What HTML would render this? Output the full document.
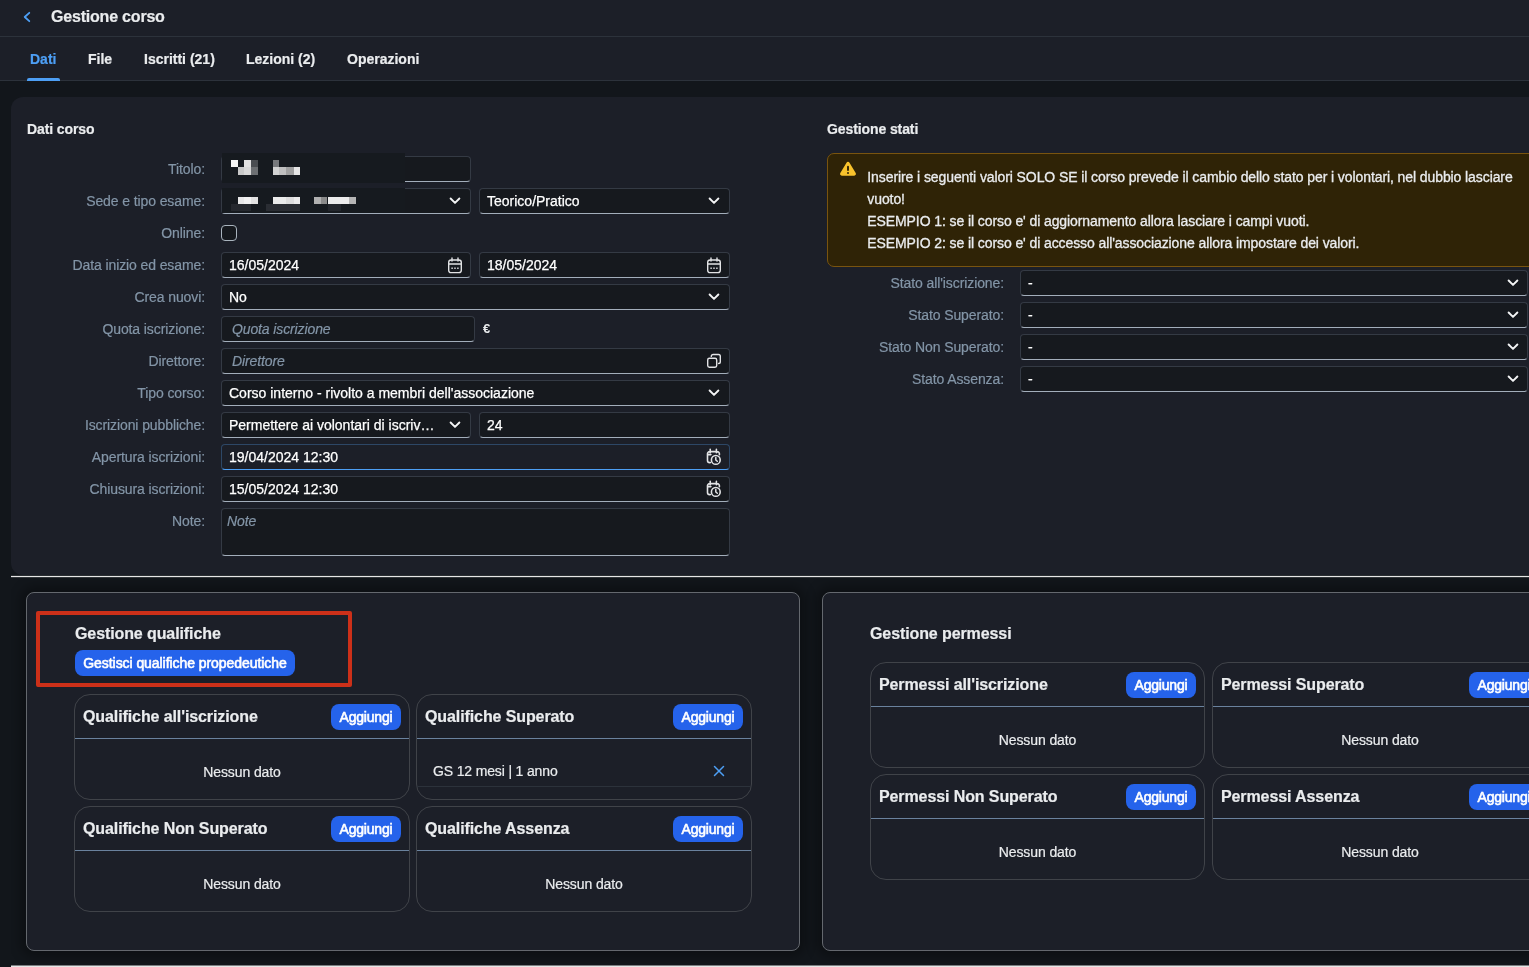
<!DOCTYPE html>
<html lang="it">
<head>
<meta charset="utf-8">
<title>Gestione corso</title>
<style>
*{box-sizing:border-box;margin:0;padding:0}
html,body{width:1529px;height:967px;overflow:hidden;background:#12161b}
body{font-family:"Liberation Sans",sans-serif;font-size:14px;color:#eaecee;-webkit-font-smoothing:antialiased}
#app{will-change:transform;position:relative;width:1529px;height:967px;overflow:hidden;background:#12161b}
.abs{position:absolute}
/* header */
.bar{position:absolute;left:0;top:0;width:1529px;height:37px;background:#1c1f28;border-bottom:1px solid #2c323b}
.bar h1{position:absolute;left:51px;top:7px;font-size:16px;font-weight:bold;line-height:20px;color:#eaecee;white-space:nowrap;letter-spacing:-.2px;-webkit-text-stroke:.2px #eaecee}
.tabs{position:absolute;left:0;top:37px;width:1529px;height:44px;background:#1c1f28;border-bottom:1px solid #2c323b}
.tabs a{position:absolute;top:13px;-webkit-text-stroke:.2px;font-weight:bold;font-size:14px;line-height:18px;color:#eaecee;white-space:nowrap;text-decoration:none}
.tabs a.sel{color:#4d9ff5}
.tabs .ind{position:absolute;left:27px;top:41px;width:33px;height:3px;background:#4d9ff5;border-radius:2px 2px 0 0}
/* panel */
.panel{position:absolute;left:11px;top:97px;width:1540px;height:478px;background:#1c1f28;border-radius:12px}
.sep{position:absolute;left:11px;height:3px;width:1530px;background:linear-gradient(rgba(255,255,255,.1) 0,rgba(255,255,255,.1) 1px,#e6e6e6 1px,#e6e6e6 2px,rgba(255,255,255,.14) 2px,rgba(255,255,255,.14) 3px)}
.sep.b{height:2px;background:linear-gradient(#7c7e81 0,#7c7e81 1px,#e6e6e6 1px,#e6e6e6 2px)}
.lower{position:absolute;left:11px;top:578px;width:1518px;height:387px;overflow:hidden}
h2{position:absolute;font-size:14px;font-weight:bold;line-height:18px;color:#eaecee;white-space:nowrap;letter-spacing:-.1px;-webkit-text-stroke:.2px #eaecee}
h3{position:absolute;font-size:16px;font-weight:bold;line-height:20px;color:#eaecee;white-space:nowrap;letter-spacing:-.1px;-webkit-text-stroke:.2px #eaecee}
label{position:absolute;text-align:right;color:#8395a7;font-size:14px;line-height:18px;white-space:nowrap;letter-spacing:-.1px;-webkit-text-stroke:.2px #8395a7}
.f{position:absolute;height:26px;background:#16191e;border:1px solid #343a44;border-bottom-color:#a3aebb;border-radius:4px;font-size:14px;line-height:24px;padding:0 7px;color:#fff;white-space:nowrap;overflow:hidden;-webkit-text-stroke:.25px #fff}
.f.ph{font-style:italic;color:#8395a7;padding-left:10px;letter-spacing:-.12px;-webkit-text-stroke:.2px #8395a7}
.f.hov{background:#1c1f28;border-color:#2d4766;border-bottom-color:#4d9ff5}
.f svg{position:absolute}

.el{display:inline-block;max-width:207px;overflow:hidden;text-overflow:ellipsis;vertical-align:top}
.cb{position:absolute;width:16px;height:16px;border:1px solid #a9b4be;border-radius:4px;background:#16191e}
.f.ph.ta{line-height:18px;padding-top:3px;padding-left:5px}
.strip{position:absolute;width:720px;height:114px;background:#2f2306;border:1px solid #79540f;border-radius:7px}
.strip p{position:absolute;left:39.3px;top:12px;width:670px;font-size:14px;line-height:22px;color:#eaecee;letter-spacing:-.09px;-webkit-text-stroke:.3px #eaecee}

.box{position:absolute;background:#1c1f28;border:1px solid #64686e;border-radius:8px;box-shadow:0 0 12px 5px rgba(0,0,0,.33)}
.hl{position:absolute;border:4px solid #cc3019;border-radius:2px}
.btn{position:absolute;height:26px;border:0;border-radius:8px;background:#2563eb;color:#fff;font-family:inherit;font-size:14px;font-weight:normal;-webkit-text-stroke:0.6px #fff;letter-spacing:-0.06px;line-height:26px;text-align:center;white-space:nowrap;padding:0}
.card{position:absolute;width:336px;height:106px;border:1px solid #404349;border-radius:16px;overflow:hidden}
.card header{position:absolute;left:0;top:0;right:0;height:44px;border-bottom:1px solid #6a829e}
.card h3{left:8px;top:11.5px}
.card .btn{right:8px;top:9px;width:70px;letter-spacing:-.2px}
.card .nd{position:absolute;left:0;right:0;top:68px;text-align:center;font-size:14px;line-height:18px;color:#eaecee;letter-spacing:-.1px;-webkit-text-stroke:.2px #eaecee}
.list{position:absolute;left:0;right:0;top:44px;list-style:none}
.list li{position:relative;height:48px;border-bottom:1px solid #2c323b;padding:23px 0 0 16px;font-size:14px;line-height:18px;color:#eaecee;letter-spacing:-.15px;-webkit-text-stroke:.2px #eaecee}
.redact i{position:absolute;display:block}
.eur{font-size:13px;line-height:18px;font-weight:bold;color:#eaecee;margin-top:1px}
</style>
</head>
<body>
<div id="app">
<header class="bar">
  <svg class="abs" style="left:22px;top:11px" width="10" height="12" viewBox="0 0 10 12"><path d="M7.3 1.8 2.7 6l4.6 4.2" fill="none" stroke="#4d9ff5" stroke-width="1.8" stroke-linecap="round" stroke-linejoin="round"/></svg>
  <h1>Gestione corso</h1>
</header>
<nav class="tabs">
  <a class="sel" style="left:30px">Dati</a>
  <a style="left:88px">File</a>
  <a style="left:144px">Iscritti (21)</a>
  <a style="left:246px">Lezioni (2)</a>
  <a style="left:347px">Operazioni</a>
  <span class="ind"></span>
</nav>
<main>
<section class="panel" id="panel">
<h2 style="left:16px;top:23px">Dati corso</h2>
<label style="left:-6px;width:200px;top:63px">Titolo:</label>
<label style="left:-6px;width:200px;top:95px">Sede e tipo esame:</label>
<label style="left:-6px;width:200px;top:127px">Online:</label>
<label style="left:-6px;width:200px;top:159px">Data inizio ed esame:</label>
<label style="left:-6px;width:200px;top:191px">Crea nuovi:</label>
<label style="left:-6px;width:200px;top:223px">Quota iscrizione:</label>
<label style="left:-6px;width:200px;top:255px">Direttore:</label>
<label style="left:-6px;width:200px;top:287px">Tipo corso:</label>
<label style="left:-6px;width:200px;top:319px">Iscrizioni pubbliche:</label>
<label style="left:-6px;width:200px;top:351px">Apertura iscrizioni:</label>
<label style="left:-6px;width:200px;top:383px">Chiusura iscrizioni:</label>
<label style="left:-6px;width:200px;top:415px">Note:</label>
<div class="f" style="left:210px;top:59px;width:250px"></div>
<div class="f" style="left:210px;top:91px;width:250px"><svg style="right:9px;top:8px" width="12" height="8" viewBox="0 0 12 8"><path d="M1.6 1.5 6 5.9l4.4-4.4" fill="none" stroke="#f3f4f5" stroke-width="1.9" stroke-linecap="round" stroke-linejoin="round"/></svg></div>
<div class="f" style="left:468px;top:91px;width:251px">Teorico/Pratico<svg style="right:9px;top:8px" width="12" height="8" viewBox="0 0 12 8"><path d="M1.6 1.5 6 5.9l4.4-4.4" fill="none" stroke="#f3f4f5" stroke-width="1.9" stroke-linecap="round" stroke-linejoin="round"/></svg></div>
<span class="cb" style="left:210px;top:128px"></span>
<div class="f" style="left:210px;top:155px;width:250px">16/05/2024<svg style="right:7px;top:3.5px" width="16" height="17" viewBox="0 0 16 17"><rect x="1.7" y="3" width="12.6" height="12.6" rx="2.4" fill="none" stroke="#e2e3e5" stroke-width="1.4"/><path d="M1.7 7h12.6M5 .9v3.2M11 .9v3.2" stroke="#e2e3e5" stroke-width="1.4" stroke-linecap="round" fill="none"/><path d="M4.4 11.3h1.4M7.3 11.3h1.4M10.2 11.3h1.4" stroke="#e2e3e5" stroke-width="1.5" fill="none"/></svg></div>
<div class="f" style="left:468px;top:155px;width:251px">18/05/2024<svg style="right:7px;top:3.5px" width="16" height="17" viewBox="0 0 16 17"><rect x="1.7" y="3" width="12.6" height="12.6" rx="2.4" fill="none" stroke="#e2e3e5" stroke-width="1.4"/><path d="M1.7 7h12.6M5 .9v3.2M11 .9v3.2" stroke="#e2e3e5" stroke-width="1.4" stroke-linecap="round" fill="none"/><path d="M4.4 11.3h1.4M7.3 11.3h1.4M10.2 11.3h1.4" stroke="#e2e3e5" stroke-width="1.5" fill="none"/></svg></div>
<div class="f" style="left:210px;top:187px;width:509px">No<svg style="right:9px;top:8px" width="12" height="8" viewBox="0 0 12 8"><path d="M1.6 1.5 6 5.9l4.4-4.4" fill="none" stroke="#f3f4f5" stroke-width="1.9" stroke-linecap="round" stroke-linejoin="round"/></svg></div>
<div class="f ph" style="left:210px;top:219px;width:254px">Quota iscrizione</div>
<span class="abs eur" style="left:472px;top:222px">€</span>
<div class="f ph" style="left:210px;top:251px;width:509px">Direttore<svg style="right:7px;top:4px" width="16" height="16" viewBox="0 0 16 16"><rect x="1.7" y="5.2" width="9" height="9" rx="1.7" fill="none" stroke="#e2e3e5" stroke-width="1.4"/><path d="M5.3 3.4V3.3A1.8 1.8 0 0 1 7.1 1.5h5.4A1.8 1.8 0 0 1 14.3 3.3v5.4A1.8 1.8 0 0 1 12.5 10.5" fill="none" stroke="#e2e3e5" stroke-width="1.4" stroke-linecap="round"/></svg></div>
<div class="f" style="left:210px;top:283px;width:509px">Corso interno - rivolto a membri dell'associazione<svg style="right:9px;top:8px" width="12" height="8" viewBox="0 0 12 8"><path d="M1.6 1.5 6 5.9l4.4-4.4" fill="none" stroke="#f3f4f5" stroke-width="1.9" stroke-linecap="round" stroke-linejoin="round"/></svg></div>
<div class="f" style="left:210px;top:315px;width:250px"><span class="el">Permettere ai volontari di iscriversi</span><svg style="right:9px;top:8px" width="12" height="8" viewBox="0 0 12 8"><path d="M1.6 1.5 6 5.9l4.4-4.4" fill="none" stroke="#f3f4f5" stroke-width="1.9" stroke-linecap="round" stroke-linejoin="round"/></svg></div>
<div class="f" style="left:468px;top:315px;width:251px">24</div>
<div class="f hov" style="left:210px;top:347px;width:509px">19/04/2024 12:30<svg style="right:7px;top:3px" width="16" height="18" viewBox="0 0 16 18"><path d="M4.3 14.6H3.7A2.2 2.2 0 0 1 1.5 12.4V5.8A2.2 2.2 0 0 1 3.7 3.6h7.5a2.2 2.2 0 0 1 2.2 2.2v.9M1.5 6.6h3.4M4.2 1.3v3.4M10.4 1.3v3.4" fill="none" stroke="#e2e3e5" stroke-width="1.6" stroke-linecap="round"/><circle cx="9.8" cy="11.9" r="4.4" fill="none" stroke="#e2e3e5" stroke-width="1.6"/><path d="M9.8 9.6v2.4l1.5 1.3" fill="none" stroke="#e2e3e5" stroke-width="1.5" stroke-linecap="round" stroke-linejoin="round"/></svg></div>
<div class="f" style="left:210px;top:379px;width:509px">15/05/2024 12:30<svg style="right:7px;top:3px" width="16" height="18" viewBox="0 0 16 18"><path d="M4.3 14.6H3.7A2.2 2.2 0 0 1 1.5 12.4V5.8A2.2 2.2 0 0 1 3.7 3.6h7.5a2.2 2.2 0 0 1 2.2 2.2v.9M1.5 6.6h3.4M4.2 1.3v3.4M10.4 1.3v3.4" fill="none" stroke="#e2e3e5" stroke-width="1.6" stroke-linecap="round"/><circle cx="9.8" cy="11.9" r="4.4" fill="none" stroke="#e2e3e5" stroke-width="1.6"/><path d="M9.8 9.6v2.4l1.5 1.3" fill="none" stroke="#e2e3e5" stroke-width="1.5" stroke-linecap="round" stroke-linejoin="round"/></svg></div>
<div class="f ph ta" style="left:210px;top:411px;width:509px;height:48px">Note</div>
<div class="redact" aria-hidden="true"><i style="left:211px;top:56px;width:183px;height:29.5px;background:#161a1f"></i><i style="left:211px;top:91px;width:183px;height:25px;background:#161a1f"></i><i style="left:219.5px;top:63.1px;width:7.2px;height:7.3px;background:#f4f4f4"></i><i style="left:232.9px;top:63.1px;width:7.1px;height:7.3px;background:#e2e2e2"></i><i style="left:240px;top:63.1px;width:6.8px;height:7.3px;background:#4a4d51"></i><i style="left:226.7px;top:70.4px;width:6.2px;height:7.4px;background:#c8c8c8"></i><i style="left:232.9px;top:70.4px;width:7.1px;height:7.4px;background:#d8d8d8"></i><i style="left:240px;top:70.4px;width:6.8px;height:7.4px;background:#6c6f72"></i><i style="left:261.9px;top:63.1px;width:5.8px;height:7.3px;background:#77797c"></i><i style="left:261.9px;top:70.4px;width:5.8px;height:7.4px;background:#d2d2d2"></i><i style="left:267.7px;top:70.4px;width:7px;height:7.4px;background:#bfbfbf"></i><i style="left:274.7px;top:70.4px;width:7.9px;height:7.4px;background:#a0a0a0"></i><i style="left:282.6px;top:70.4px;width:6.2px;height:7.4px;background:#e6e6e6"></i><i style="left:226.7px;top:99.7px;width:6.2px;height:7.5px;background:#e8e8e8"></i><i style="left:232.9px;top:99.7px;width:7.1px;height:7.5px;background:#f2f2f2"></i><i style="left:240px;top:99.7px;width:6.8px;height:7.5px;background:#e2e2e2"></i><i style="left:261.9px;top:99.7px;width:12.8px;height:7.5px;background:#ebebeb"></i><i style="left:274.7px;top:99.7px;width:7.9px;height:7.5px;background:#dedede"></i><i style="left:282.6px;top:99.7px;width:6.2px;height:7.5px;background:#ececec"></i><i style="left:302.5px;top:99.7px;width:7.4px;height:7.5px;background:#b0b0b0"></i><i style="left:309.9px;top:99.7px;width:6.6px;height:7.5px;background:#8a8a8a"></i><i style="left:316.5px;top:99.7px;width:21px;height:7.5px;background:#ececec"></i><i style="left:337.5px;top:99.7px;width:7.5px;height:7.5px;background:#b5b5b5"></i><i style="left:219.5px;top:107.2px;width:20.5px;height:7px;background:#25282e"></i><i style="left:254.9px;top:107.2px;width:33.9px;height:7px;background:#2a2d33"></i><i style="left:316.5px;top:107.2px;width:13.8px;height:7px;background:#23262c"></i></div>
<h2 style="left:816px;top:23px">Gestione stati</h2>
<div class="strip" style="left:816px;top:56px"><svg class="abs" style="left:10.5px;top:7px" width="18" height="16" viewBox="0 0 18 16"><path d="M9 .8c.7 0 1.2.4 1.5 1l6.2 10.3c.7 1.2-.1 2.6-1.5 2.6H2.8c-1.4 0-2.2-1.4-1.5-2.6L7.5 1.8c.3-.6.8-1 1.5-1z" fill="#f8c22c"/><path d="M9 5.7v3.4" stroke="#2f2306" stroke-width="1.9" stroke-linecap="round"/><circle cx="9" cy="12.1" r="1" fill="#2f2306"/></svg><p>Inserire i seguenti valori SOLO SE il corso prevede il cambio dello stato per i volontari, nel dubbio lasciare vuoto!<br>ESEMPIO 1: se il corso e' di aggiornamento allora lasciare i campi vuoti.<br>ESEMPIO 2: se il corso e' di accesso all'associazione allora impostare dei valori.</p></div>
<label style="left:793px;width:200px;top:177px">Stato all'iscrizione:</label>
<div class="f" style="left:1009px;top:173px;width:508px">-<svg style="right:8px;top:8px" width="12" height="8" viewBox="0 0 12 8"><path d="M1.6 1.5 6 5.9l4.4-4.4" fill="none" stroke="#f3f4f5" stroke-width="1.9" stroke-linecap="round" stroke-linejoin="round"/></svg></div>
<label style="left:793px;width:200px;top:209px">Stato Superato:</label>
<div class="f" style="left:1009px;top:205px;width:508px">-<svg style="right:8px;top:8px" width="12" height="8" viewBox="0 0 12 8"><path d="M1.6 1.5 6 5.9l4.4-4.4" fill="none" stroke="#f3f4f5" stroke-width="1.9" stroke-linecap="round" stroke-linejoin="round"/></svg></div>
<label style="left:793px;width:200px;top:241px">Stato Non Superato:</label>
<div class="f" style="left:1009px;top:237px;width:508px">-<svg style="right:8px;top:8px" width="12" height="8" viewBox="0 0 12 8"><path d="M1.6 1.5 6 5.9l4.4-4.4" fill="none" stroke="#f3f4f5" stroke-width="1.9" stroke-linecap="round" stroke-linejoin="round"/></svg></div>
<label style="left:793px;width:200px;top:273px">Stato Assenza:</label>
<div class="f" style="left:1009px;top:269px;width:508px">-<svg style="right:8px;top:8px" width="12" height="8" viewBox="0 0 12 8"><path d="M1.6 1.5 6 5.9l4.4-4.4" fill="none" stroke="#f3f4f5" stroke-width="1.9" stroke-linecap="round" stroke-linejoin="round"/></svg></div>
</section>
<div class="sep" style="top:575px"></div>
<div class="lower">
<section class="box" style="left:15px;top:14px;width:774px;height:359px">
<div class="hl" style="left:9px;top:18px;width:316px;height:76px"></div>
<h3 style="left:48px;top:30.5px">Gestione qualifiche</h3>
<button class="btn" style="left:48px;top:57px;width:220px">Gestisci qualifiche propedeutiche</button>
<article class="card" style="left:47px;top:101px"><header><h3>Qualifiche all'iscrizione</h3><button class="btn">Aggiungi</button></header><div class="nd">Nessun dato</div></article>
<article class="card" style="left:389px;top:101px"><header><h3>Qualifiche Superato</h3><button class="btn">Aggiungi</button></header><ul class="list"><li>GS 12 mesi | 1 anno<svg class="abs" style="right:26.5px;top:26px" width="12" height="12" viewBox="0 0 12 12"><path d="M1.5 1.5l9 9M10.5 1.5l-9 9" stroke="#4d9ff5" stroke-width="1.5" stroke-linecap="round"/></svg></li></ul></article>
<article class="card" style="left:47px;top:213px"><header><h3>Qualifiche Non Superato</h3><button class="btn">Aggiungi</button></header><div class="nd">Nessun dato</div></article>
<article class="card" style="left:389px;top:213px"><header><h3>Qualifiche Assenza</h3><button class="btn">Aggiungi</button></header><div class="nd">Nessun dato</div></article>
</section>
<section class="box" style="left:811px;top:14px;width:774px;height:359px">
<h3 style="left:47px;top:30.5px">Gestione permessi</h3>
<article class="card" style="left:47px;top:69px;width:335px"><header><h3>Permessi all'iscrizione</h3><button class="btn">Aggiungi</button></header><div class="nd">Nessun dato</div></article>
<article class="card" style="left:389px;top:69px"><header><h3>Permessi Superato</h3><button class="btn">Aggiungi</button></header><div class="nd">Nessun dato</div></article>
<article class="card" style="left:47px;top:181px;width:335px"><header><h3>Permessi Non Superato</h3><button class="btn">Aggiungi</button></header><div class="nd">Nessun dato</div></article>
<article class="card" style="left:389px;top:181px"><header><h3>Permessi Assenza</h3><button class="btn">Aggiungi</button></header><div class="nd">Nessun dato</div></article>
</section>
</div>
<div class="sep b" style="top:965px"></div>
</main>
</div>
</body>
</html>
